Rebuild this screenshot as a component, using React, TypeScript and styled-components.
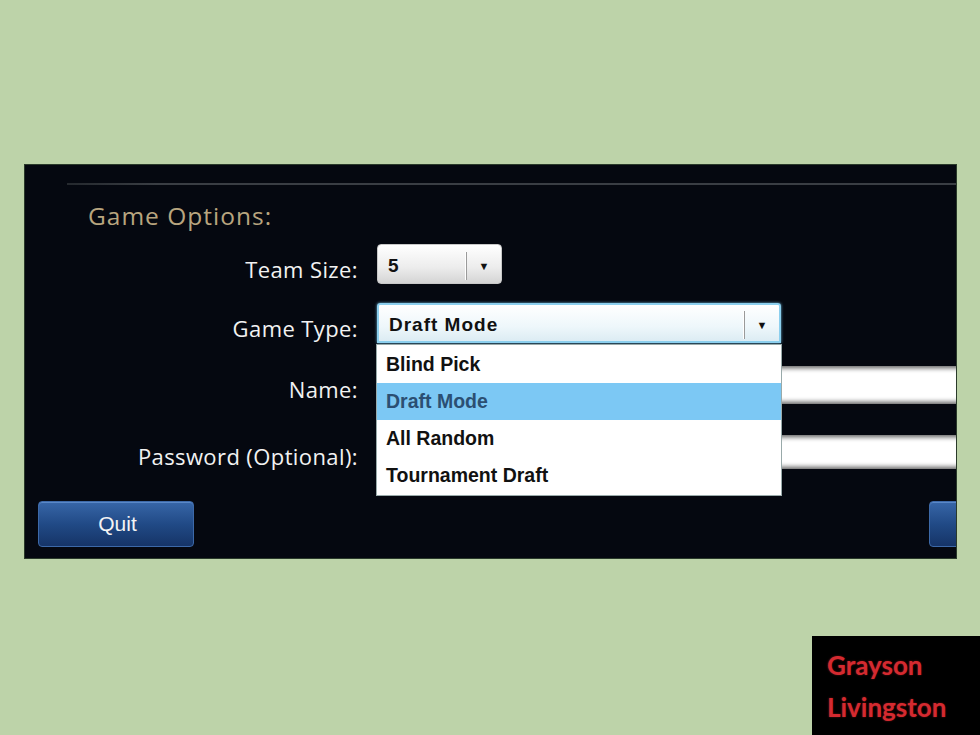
import React from 'react';
import styled, { createGlobalStyle } from 'styled-components';

const GlobalStyle = createGlobalStyle`
	html, body {
		margin: 0;
		padding: 0;
		background: #bdd3a9;
		width: 980px;
		height: 735px;
		overflow: hidden;
	}
`;

const Page = styled.div`
	width: 980px;
	height: 735px;
	padding-top: 165px;
	box-sizing: border-box;
	display: flex;
	flex-direction: column;
`;

const Panel = styled.div`
	margin-left: 25px;
	width: 931px;
	height: 393px;
	background: #050810;
	overflow: hidden;
	display: flex;
	flex-direction: column;
	box-shadow: 0 0 0 1px #2a3a2a;
`;

const Rule = styled.div`
	margin: 18px 0 0 42px;
	height: 2px;
	background: linear-gradient(90deg, #25292e, #3a3e44 10%, #3a3e44);
`;

const Title = styled.div`
	margin: 17px 0 0 63px;
	font-family: 'Open Sans', sans-serif;
	font-size: 24.5px;
	line-height: 28px;
	color: #b8a57f;
	letter-spacing: 1px;
`;

const Form = styled.div`
	margin-top: 12px;
	display: grid;
	grid-template-columns: 333px 1fr;
	column-gap: 19px;
	align-items: center;
`;

const Label = styled.div<{ $top: number }>`
	margin-top: ${(p) => p.$top}px;
	text-align: right;
	font-family: 'Open Sans', sans-serif;
	font-size: 22px;
	letter-spacing: 0.4px;
	color: #f2f2f2;
	padding-top: 9px;
`;

const Cell = styled.div<{ $top: number }>`
	margin-top: ${(p) => p.$top}px;
	position: relative;
`;

const Select = styled.div<{ $width: number; $open?: boolean }>`
	width: ${(p) => p.$width}px;
	height: 40px;
	box-sizing: border-box;
	border-radius: ${(p) => (p.$open ? '3px 3px 0 0' : '4px')};
	background: ${(p) =>
		p.$open
			? 'linear-gradient(#ffffff, #eef7fb 60%, #dcecf3)'
			: 'linear-gradient(#ffffff, #ececec 60%, #d4d4d4)'};
	border: ${(p) => (p.$open ? '2px solid #8ccfee' : '1px solid #c8c8c8')};
	box-shadow: ${(p) => (p.$open ? '0 0 3px #6fb7da' : 'none')};
	display: flex;
	align-items: center;
	padding-top: 3px;
	font-family: 'Liberation Sans', Arial, sans-serif;
	font-weight: bold;
	font-size: 19px;
	color: #111;
`;

const SelectValue = styled.div<{ $spaced?: boolean }>`
	flex: 1;
	padding-left: 10px;
	letter-spacing: ${(p) => (p.$spaced ? '1px' : '0')};
`;

const ArrowBox = styled.div`
	width: 34px;
	height: 28px;
	border-left: 1px solid #9a9a9a;
	box-shadow: -1px 0 0 #fff;
	display: flex;
	align-items: center;
	justify-content: center;
	font-size: 11px;
	color: #111;
`;

const Menu = styled.div`
	position: absolute;
	left: -1px;
	top: 41px;
	width: 404px;
	background: #fff;
	border: 1px solid #9aa;
	padding: 1px 0 1px;
	z-index: 2;
`;

const Option = styled.div<{ $active?: boolean }>`
	height: 37px;
	display: flex;
	align-items: center;
	padding-left: 9px;
	font-family: 'Liberation Sans', Arial, sans-serif;
	font-weight: bold;
	font-size: 19.5px;
	color: ${(p) => (p.$active ? '#2b4f72' : '#111')};
	background: ${(p) => (p.$active ? '#7cc8f4' : '#fff')};
`;

const Field = styled.div<{ $height: number }>`
	width: 620px;
	height: ${(p) => p.$height}px;
	background: #fff;
	border-radius: 3px;
	box-shadow: inset 0 4px 5px -2px #5a5a5a, inset 0 -4px 5px -2px #5a5a5a;
`;

const Footer = styled.div`
	margin-top: auto;
	margin-bottom: 11px;
	padding-left: 13px;
	display: flex;
	justify-content: space-between;
`;

const Button = styled.div<{ $clip?: boolean }>`
	width: 156px;
	height: 46px;
	box-sizing: border-box;
	margin-right: ${(p) => (p.$clip ? '-129px' : '0')};
	border-radius: 4px;
	border: 1px solid #3d69a8;
	background: linear-gradient(#3766a8, #214a86 50%, #163467);
	box-shadow: inset 0 1px 0 #5a88c8;
	display: flex;
	align-items: center;
	justify-content: center;
	padding-left: 3px;
	font-family: 'Liberation Sans Narrow', 'Liberation Sans', Arial, sans-serif;
	font-size: 21px;
	color: #f4f4f4;
`;

const Signature = styled.div`
	margin-top: 78px;
	margin-left: 812px;
	width: 168px;
	flex: 1;
	background: #000;
	padding: 8px 0 0 15px;
	box-sizing: border-box;
	font-family: Lato, 'Open Sans', sans-serif;
	font-weight: bold;
	font-size: 26px;
	line-height: 42px;
	color: #d42a30;
	text-shadow: 0 0 2px rgba(220, 40, 40, 0.5);
`;

const options = ['Blind Pick', 'Draft Mode', 'All Random', 'Tournament Draft'];

export default function App() {
	return (
		<Page>
			<GlobalStyle />
			<Panel>
				<Rule />
				<Title>Game Options:</Title>
				<Form>
					<Label $top={2}>Team Size:</Label>
					<Cell $top={2}>
						<Select $width={125}>
							<SelectValue>5</SelectValue>
							<ArrowBox>▼</ArrowBox>
						</Select>
					</Cell>
					<Label $top={19}>Game Type:</Label>
					<Cell $top={19} style={{ zIndex: 3 }}>
						<Select $width={404} $open>
							<SelectValue $spaced>Draft Mode</SelectValue>
							<ArrowBox>▼</ArrowBox>
						</Select>
						<Menu>
							{options.map((o) => (
								<Option key={o} $active={o === 'Draft Mode'}>
									{o}
								</Option>
							))}
						</Menu>
					</Cell>
					<Label $top={22}>Name:</Label>
					<Cell $top={22}>
						<Field $height={38} />
					</Cell>
					<Label $top={28}>Password (Optional):</Label>
					<Cell $top={28}>
						<Field $height={34} />
					</Cell>
				</Form>
				<Footer>
					<Button>Quit</Button>
					<Button $clip />
				</Footer>
			</Panel>
			<Signature>
				Grayson
				<br />
				Livingston
			</Signature>
		</Page>
	);
}
